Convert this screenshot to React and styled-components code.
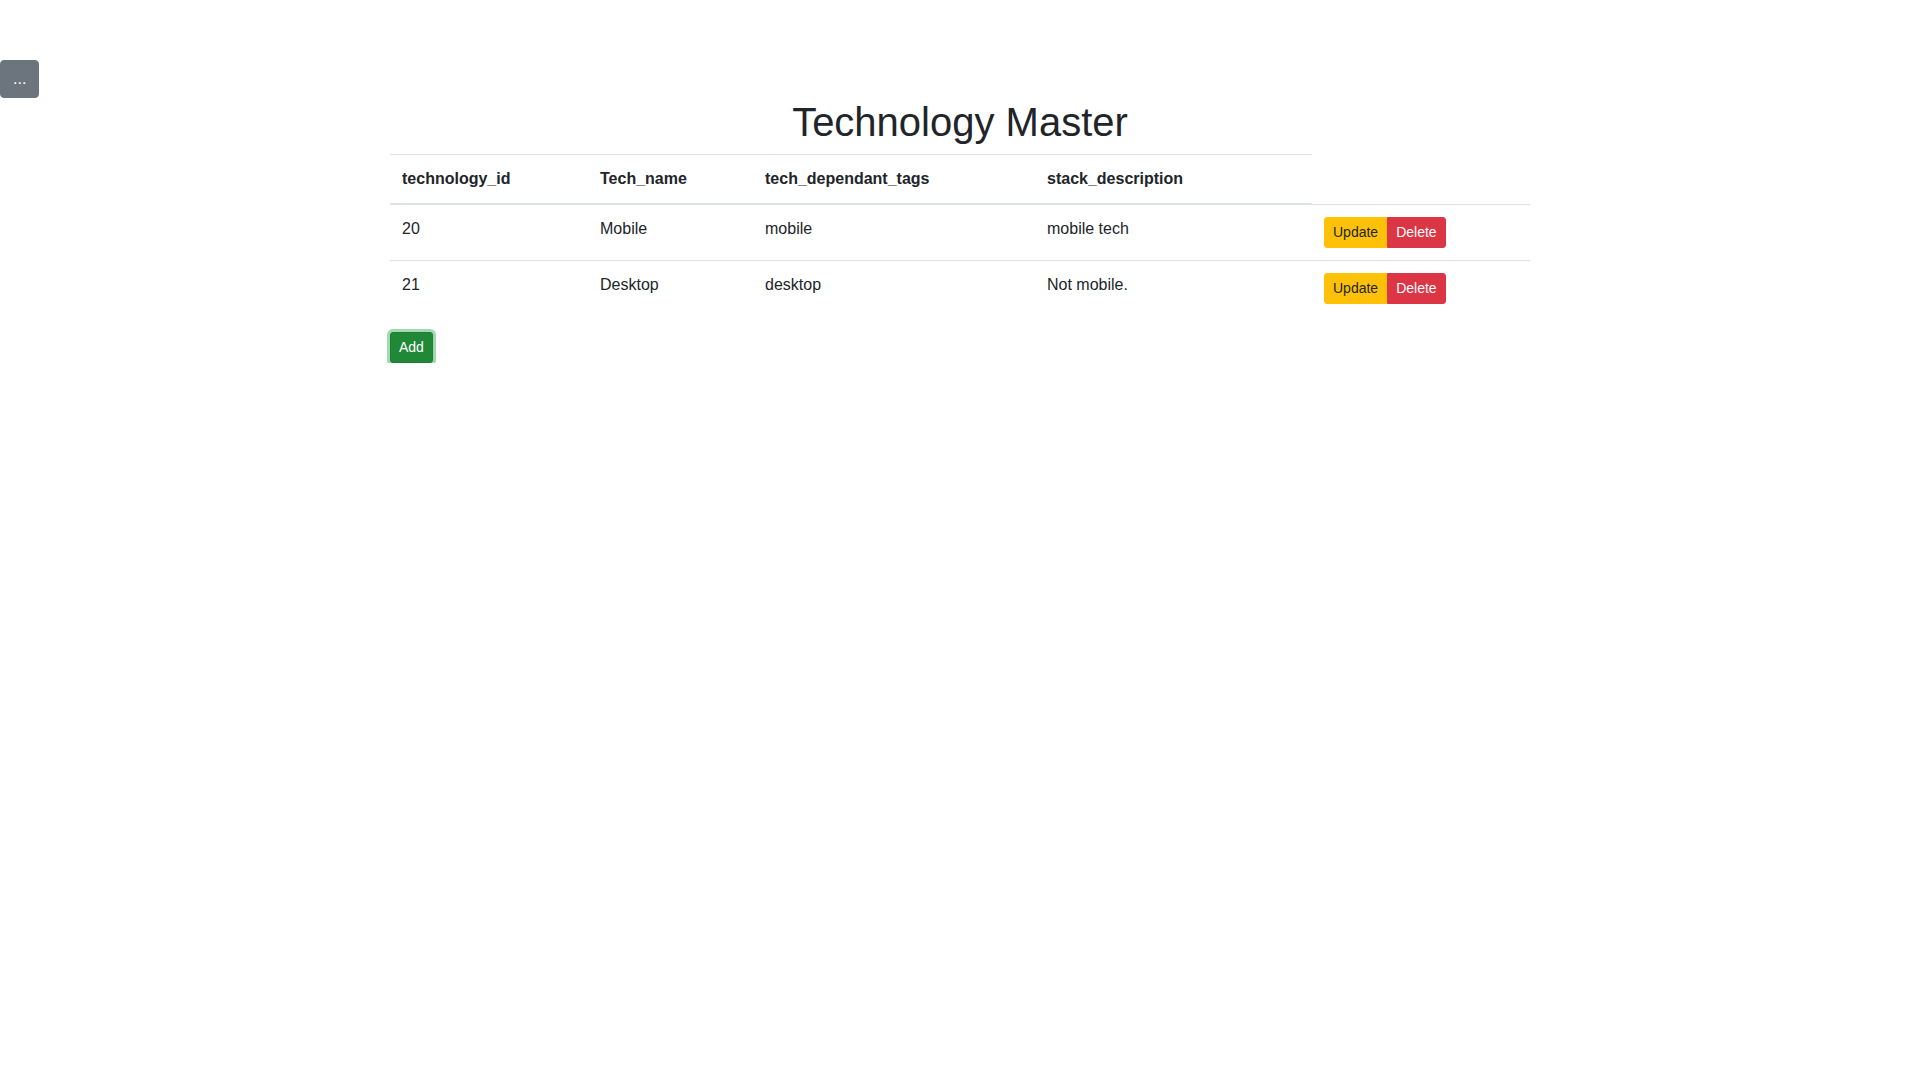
import React from "react";
import styled, { createGlobalStyle } from "styled-components";

const Global = createGlobalStyle`
  html, body { margin: 0; padding: 0; background: #fff; }
  body {
    font-family: "Liberation Sans", Arial, sans-serif;
    font-size: 16px;
    line-height: 1.5;
    color: #212529;
  }
  * { box-sizing: border-box; }
`;

const Page = styled.div`
  padding-top: 60px;
`;

const TopBar = styled.div`
  display: flex;
  height: 38px;
`;

const ToggleButton = styled.button`
  font-family: inherit;
  font-size: 16px;
  line-height: 24px;
  padding: 6px 12px;
  color: #fff;
  background: #6c757d;
  border: 1px solid #6c757d;
  border-radius: 4px;
  cursor: pointer;
`;

const Title = styled.h1`
  margin: 0 0 8px;
  font-size: 40px;
  font-weight: 500;
  line-height: 1.2;
  text-align: center;
`;

const Content = styled.div`
  width: 1140px;
  margin: 0 auto;
`;

const Table = styled.table`
  width: 100%;
  border-collapse: collapse;
  margin-bottom: 16px;
  color: #212529;
`;

const HeadCell = styled.th`
  width: ${(p) => p.$w}px;
  padding: 12px;
  text-align: left;
  font-weight: 700;
  vertical-align: bottom;
  border-top: 1px solid #dee2e6;
  border-bottom: 2px solid #dee2e6;
`;

const Cell = styled.td`
  padding: 12px;
  vertical-align: top;
  border-top: 1px solid #dee2e6;
`;

const BtnGroup = styled.div`
  display: inline-flex;
  vertical-align: middle;
`;

const SmallBtn = styled.button`
  font-family: inherit;
  font-size: 14px;
  line-height: 21px;
  padding: 4px 8px;
  border: 1px solid ${(p) => p.$bg};
  background: ${(p) => p.$bg};
  color: ${(p) => p.$fg};
  cursor: pointer;
  border-radius: ${(p) => p.$radius};
`;

const AddButton = styled.button`
  font-family: inherit;
  font-size: 14px;
  line-height: 21px;
  padding: 4px 8px;
  color: #fff;
  background: #218838;
  border: 1px solid #1e7e34;
  border-radius: 3px;
  box-shadow: 0 0 0 3px rgba(72, 180, 97, 0.5);
  cursor: pointer;
`;

const rows = [
  { id: 20, name: "Mobile", tags: "mobile", desc: "mobile tech" },
  { id: 21, name: "Desktop", tags: "desktop", desc: "Not mobile." },
];

export default function App() {
  return (
    <Page>
      <Global />
      <TopBar>
        <ToggleButton>...</ToggleButton>
      </TopBar>
      <Title>Technology Master</Title>
      <Content>
        <Table>
          <thead>
            <tr>
              <HeadCell $w={198}>technology_id</HeadCell>
              <HeadCell $w={165}>Tech_name</HeadCell>
              <HeadCell $w={282}>tech_dependant_tags</HeadCell>
              <HeadCell $w={277}>stack_description</HeadCell>
            </tr>
          </thead>
          <tbody>
            {rows.map((r) => (
              <tr key={r.id}>
                <Cell>{r.id}</Cell>
                <Cell>{r.name}</Cell>
                <Cell>{r.tags}</Cell>
                <Cell>{r.desc}</Cell>
                <Cell>
                  <BtnGroup>
                    <SmallBtn $bg="#ffc107" $fg="#212529" $radius="3px 0 0 3px">
                      Update
                    </SmallBtn>
                    <SmallBtn $bg="#dc3545" $fg="#fff" $radius="0 3px 3px 0">
                      Delete
                    </SmallBtn>
                  </BtnGroup>
                </Cell>
              </tr>
            ))}
          </tbody>
        </Table>
        <AddButton>Add</AddButton>
      </Content>
    </Page>
  );
}
